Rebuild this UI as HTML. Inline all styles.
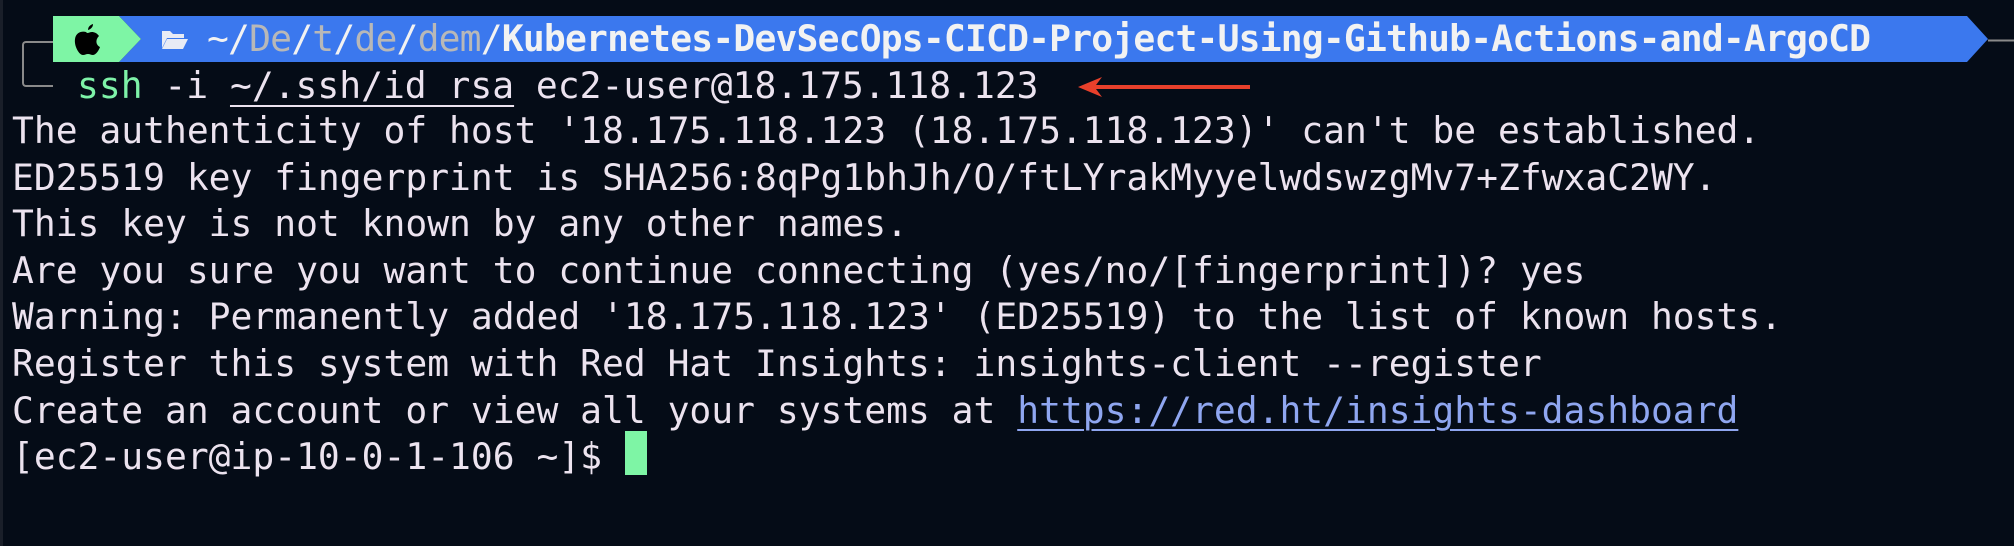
<!DOCTYPE html>
<html><head><meta charset="utf-8"><style>
html,body{margin:0;padding:0;}
body{width:2014px;height:546px;background:#050c17;position:relative;overflow:hidden;font-family:"DejaVu Sans Mono","Liberation Mono",monospace;font-size:36.3px;color:#ece3ef;}
.l{position:absolute;left:12px;white-space:pre;line-height:47px;height:47px;}
.u{text-decoration:underline;text-underline-offset:7px;text-decoration-thickness:2px;}
.g{color:#7ef2a8}
.lk{color:#8fa6f0;text-decoration:underline;text-underline-offset:6px;text-decoration-thickness:2px;}
.gr{color:#b8b8b8}
</style></head><body>
<div style="position:absolute;left:0;top:0;width:3px;height:546px;background:#1a1f29"></div>
<div style="position:absolute;left:22px;top:41px;width:31px;height:46px;border:2px solid #8a8a8a;border-right:none;border-radius:4px 0 0 4px;box-sizing:border-box"></div>
<svg style="position:absolute;left:0;top:0" width="2014" height="70">
<polygon points="119,16 1967,16 1988,39 1967,62 119,62 141,39" fill="#3b78ee"/>
<polygon points="53,16 119,16 141,39 119,62 53,62" fill="#7ef5a5"/>
<line x1="1988" y1="40.5" x2="2014" y2="40.5" stroke="#8a8a8a" stroke-width="2"/>
<path d="M88 30 C88 27 90 25 93 24 C93 27 91 29 88 30 Z" fill="#000"/>
<path d="M86 32 C82 31 76 32 75 39 C74 46 79 55 83 55 C85 55 86 54 88 54 C90 54 91 55 93 55 C96 55 99 50 100 47 C96 45 95 40 99 36 C97 33 94 32 92 32 C90 32 89 33 87 33 Z" fill="#000"/>
<path d="M162 31 h8 l3 3 h11 v4 h-17 l-5 10 z" fill="#e8ebf5"/>
<path d="M167 39 h21 l-5 10 h-21 z" fill="#e8ebf5"/>
</svg>
<div class="l" style="left:207px;top:15px;line-height:47px;color:#f2f2f2;letter-spacing:-0.8px">~/<span class="gr">De</span>/<span class="gr">t</span>/<span class="gr">de</span>/<span class="gr">dem</span>/<b>Kubernetes-DevSecOps-CICD-Project-Using-Github-Actions-and-ArgoCD</b></div>
<div class="l" style="left:77px;top:62px"><span class="g">ssh</span> -i <span class="u">~/.ssh/id_rsa</span> ec2-user@18.175.118.123</div>
<svg style="position:absolute;left:1076px;top:76px" width="180" height="22">
<polygon points="2,11 26,1 20,9 174,9 174,13 20,13 26,21" fill="#e8402b"/>
</svg>
<div class="l" style="top:107px">The authenticity of host '18.175.118.123 (18.175.118.123)' can't be established.</div>
<div class="l" style="top:153.6px">ED25519 key fingerprint is SHA256:8qPg1bhJh/O/ftLYrakMyyelwdswzgMv7+ZfwxaC2WY.</div>
<div class="l" style="top:200.2px">This key is not known by any other names.</div>
<div class="l" style="top:246.8px">Are you sure you want to continue connecting (yes/no/[fingerprint])? yes</div>
<div class="l" style="top:293.4px">Warning: Permanently added '18.175.118.123' (ED25519) to the list of known hosts.</div>
<div class="l" style="top:340px">Register this system with Red Hat Insights: insights-client --register</div>
<div class="l" style="top:386.6px">Create an account or view all your systems at <span class="lk">https://red.ht/insights-dashboard</span></div>
<div class="l" style="top:433.2px">[ec2-user@ip-10-0-1-106 ~]$ </div>
<div style="position:absolute;left:625px;top:431px;width:22px;height:44px;background:#7ef5a5"></div>
</body></html>
